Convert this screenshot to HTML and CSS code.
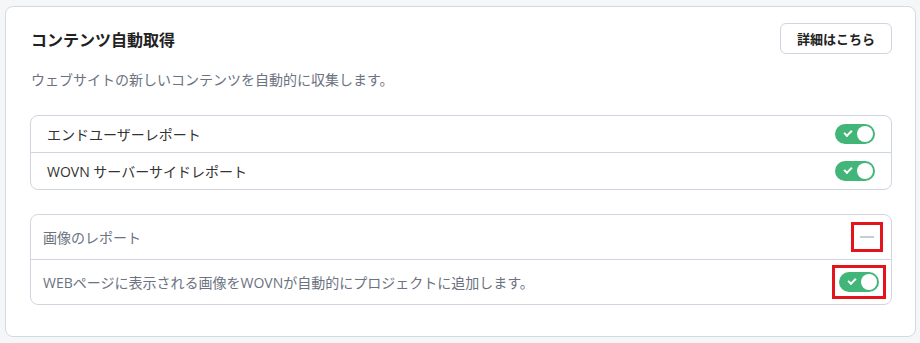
FILE: index.html
```html
<!DOCTYPE html>
<html lang="ja">
<head>
<meta charset="UTF-8">
<meta name="viewport" content="width=device-width, initial-scale=1.0">
<title>コンテンツ自動取得</title>
<link rel="stylesheet" href="styles.css">
</head>
<body>
<div class="card">
<div class="card-header">
<h2 class="card-title">コンテンツ自動取得</h2>
<a href="#" class="detail-btn">詳細はこちら</a>
</div>
<p class="card-desc">ウェブサイトの新しいコンテンツを自動的に収集します。</p>
<div class="option-list">
<div class="option-row">
<span class="option-label">エンドユーザーレポート</span>
<label class="toggle"><input type="checkbox" checked><span class="slider"></span></label>
</div>
<div class="option-row">
<span class="option-label">WOVN サーバーサイドレポート</span>
<label class="toggle"><input type="checkbox" checked><span class="slider"></span></label>
</div>
</div>
<div class="option-list image-report">
<div class="option-row">
<span class="option-label">画像のレポート</span>
<span class="collapse-box"><span class="dash"></span></span>
</div>
<div class="option-row">
<span class="option-label">WEBページに表示される画像をWOVNが自動的にプロジェクトに追加します。</span>
<label class="toggle marked"><input type="checkbox" checked><span class="slider"></span></label>
</div>
</div>
</div>
</body>
</html>
```
FILE: styles.css
```css
* {
margin: 0;
padding: 0;
box-sizing: border-box;
font-family: 'Open Sans', 'Noto Sans CJK JP', sans-serif;
}
body {
background-color: #f5f6f8;
padding: 6px 4px 6px 5px;
}
.card {
background: #fff;
border: 1px solid #d3d9e2;
border-radius: 8px;
padding: 16px 23px 32px 24px;
height: 331px;
}
.card-header {
display: flex;
justify-content: space-between;
align-items: center;
}
.card-title {
font-size: 16px;
font-weight: 700;
color: #222;
padding-left: 1px;
}
.detail-btn {
display: inline-flex;
align-items: center;
height: 31px;
padding: 0 16px;
border: 1px solid #cfd6e0;
border-radius: 6px;
color: #222;
font-size: 13px;
font-weight: 700;
text-decoration: none;
}
.card-desc {
margin-top: 16px;
font-size: 14px;
line-height: 20px;
color: #6b7280;
padding-left: 1px;
}
.option-list {
margin-top: 25px;
border: 1px solid #cfd6e0;
border-radius: 8px;
}
.option-row {
display: flex;
justify-content: space-between;
align-items: center;
height: 36px;
padding: 0 16px;
}
.option-row + .option-row {
border-top: 1px solid #cfd6e0;
height: 37px;
}
.option-label {
font-size: 14px;
color: #333;
}
.image-report {
margin-top: 24px;
}
.image-report .option-row {
height: 44px;
padding: 0 12px;
}
.image-report .option-row + .option-row {
height: 45px;
}
.image-report .option-label {
color: #6b7280;
}
.toggle {
position: relative;
display: inline-block;
width: 40px;
height: 20px;
}
.toggle input {
display: none;
}
.slider {
position: absolute;
inset: 0;
background: #42b679;
border-radius: 10px;
}
.slider::before {
content: "";
position: absolute;
right: 2px;
top: 2px;
width: 16px;
height: 16px;
border-radius: 50%;
background: #fff;
}
.slider::after {
content: "";
position: absolute;
left: 9px;
top: 6px;
width: 6px;
height: 3px;
border-left: 2px solid #fff;
border-bottom: 2px solid #fff;
transform: rotate(-45deg);
}
.collapse-box {
display: flex;
align-items: center;
justify-content: center;
width: 32px;
height: 30px;
margin-right: -4px;
border: 3px solid #e3141b;
}
.dash {
width: 14px;
height: 2px;
background: #c5cdd9;
}
.marked {
outline: 3px solid #e3141b;
outline-offset: 4px;
}
```
